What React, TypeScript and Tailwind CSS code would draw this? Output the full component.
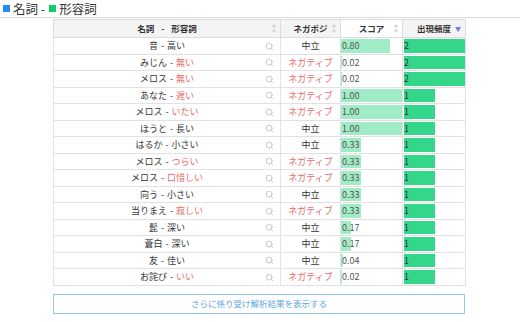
import { Search } from "lucide-react";

type Row = { noun: string; adj: string; neg: boolean; score: number; freq: number };

const rows: Row[] = [
  { noun: "音", adj: "高い", neg: false, score: 0.8, freq: 2 },
  { noun: "みじん", adj: "無い", neg: true, score: 0.02, freq: 2 },
  { noun: "メロス", adj: "無い", neg: true, score: 0.02, freq: 2 },
  { noun: "あなた", adj: "遅い", neg: true, score: 1, freq: 1 },
  { noun: "メロス", adj: "いたい", neg: true, score: 1, freq: 1 },
  { noun: "ほうと", adj: "長い", neg: false, score: 1, freq: 1 },
  { noun: "はるか", adj: "小さい", neg: false, score: 0.33, freq: 1 },
  { noun: "メロス", adj: "つらい", neg: true, score: 0.33, freq: 1 },
  { noun: "メロス", adj: "口惜しい", neg: true, score: 0.33, freq: 1 },
  { noun: "向う", adj: "小さい", neg: false, score: 0.33, freq: 1 },
  { noun: "当りまえ", adj: "寂しい", neg: true, score: 0.33, freq: 1 },
  { noun: "髭", adj: "深い", neg: false, score: 0.17, freq: 1 },
  { noun: "蒼白", adj: "深い", neg: false, score: 0.17, freq: 1 },
  { noun: "友", adj: "佳い", neg: false, score: 0.04, freq: 1 },
  { noun: "お詫び", adj: "いい", neg: true, score: 0.02, freq: 1 },
];

function SortIcon({ active }: { active?: boolean }) {
  if (active) {
    return <span className="absolute right-[4px] top-[6px] text-[6px] leading-none text-[#6b7fd6]">▼</span>;
  }
  return (
    <span className="absolute right-[4px] top-[4px] flex flex-col text-[4px] leading-[5px] text-[#d0d0d0]">
      <span>▲</span>
      <span>▼</span>
    </span>
  );
}

export default function App() {
  return (
    <div
      className="w-[520px] h-[322px] bg-white text-[#333]"
      style={{ fontFamily: '"Noto Sans CJK JP", "Noto Sans", sans-serif' }}
    >
      <div className="flex items-center pl-[3px] border-b border-[#d8d8d8] text-[12.5px] leading-[17px]">
        <span className="w-[7px] h-[7px] bg-[#1e8ef5] mr-[3px]" />
        <span>名詞 -</span>
        <span className="w-[7px] h-[7px] bg-[#14c96a] ml-[4px] mr-[3px]" />
        <span>形容詞</span>
      </div>

      <div className="pl-[53px] pt-[1px]">
        <table className="border-collapse w-[412px] table-fixed text-[9px] leading-none">
          <colgroup>
            <col className="w-[227px]" />
            <col className="w-[60px]" />
            <col className="w-[62px]" />
            <col className="w-[63px]" />
          </colgroup>
          <thead>
            <tr className="h-[18px] bg-[#f4f4f4]">
              <th className="relative border border-[#dcdcdc] font-bold text-[8.5px]">
                名詞 <span className="mx-[5px]">-</span> 形容詞
                <SortIcon />
              </th>
              <th className="relative border border-[#dcdcdc] font-bold text-[8.5px]">
                ネガポジ
                <SortIcon />
              </th>
              <th className="relative border border-[#dcdcdc] font-bold text-[8.5px] bg-white">
                スコア
                <SortIcon />
              </th>
              <th className="relative border border-[#dcdcdc] font-bold text-[8.5px]">
                出現頻度
                <SortIcon active />
              </th>
            </tr>
          </thead>
          <tbody>
            {rows.map((r, i) => (
              <tr key={i} className="h-[16.5px]">
                <td className="relative border border-[#e2e2e2] text-center">
                  <span>{r.noun}</span>
                  <span className="mx-[3px]">-</span>
                  <span className={r.neg ? "text-[#e86a6a]" : ""}>{r.adj}</span>
                  <Search className="absolute right-[6px] top-[3.5px] w-[9px] h-[9px] text-[#c4c4c4]" strokeWidth={2.5} />
                </td>
                <td className={`border border-[#e2e2e2] text-center ${r.neg ? "text-[#e86a6a]" : ""}`}>
                  {r.neg ? "ネガティブ" : "中立"}
                </td>
                <td className="relative border border-[#e2e2e2] p-0">
                  <div className="absolute left-0 top-[1px] bottom-[1px] bg-[#a0ecc6]" style={{ width: `${r.score * 100}%` }} />
                  <span className="relative pl-[1px] text-[#555]">{r.score.toFixed(2)}</span>
                </td>
                <td className="relative border border-[#e2e2e2] p-0">
                  <div className="absolute left-[1px] top-[1px] bottom-[1px] bg-[#34d68a]" style={{ width: `${(r.freq / 2) * 100 - (r.freq === 2 ? 2 : 0)}%` }} />
                  <span className="relative pl-[1px] text-[#333]">{r.freq}</span>
                </td>
              </tr>
            ))}
          </tbody>
        </table>

        <button className="mt-[8px] w-[412px] h-[20px] border border-[#8fcaf0] text-[#5ea6dc] text-[8.5px] bg-white">
          さらに係り受け解析結果を表示する
        </button>
      </div>
    </div>
  );
}
